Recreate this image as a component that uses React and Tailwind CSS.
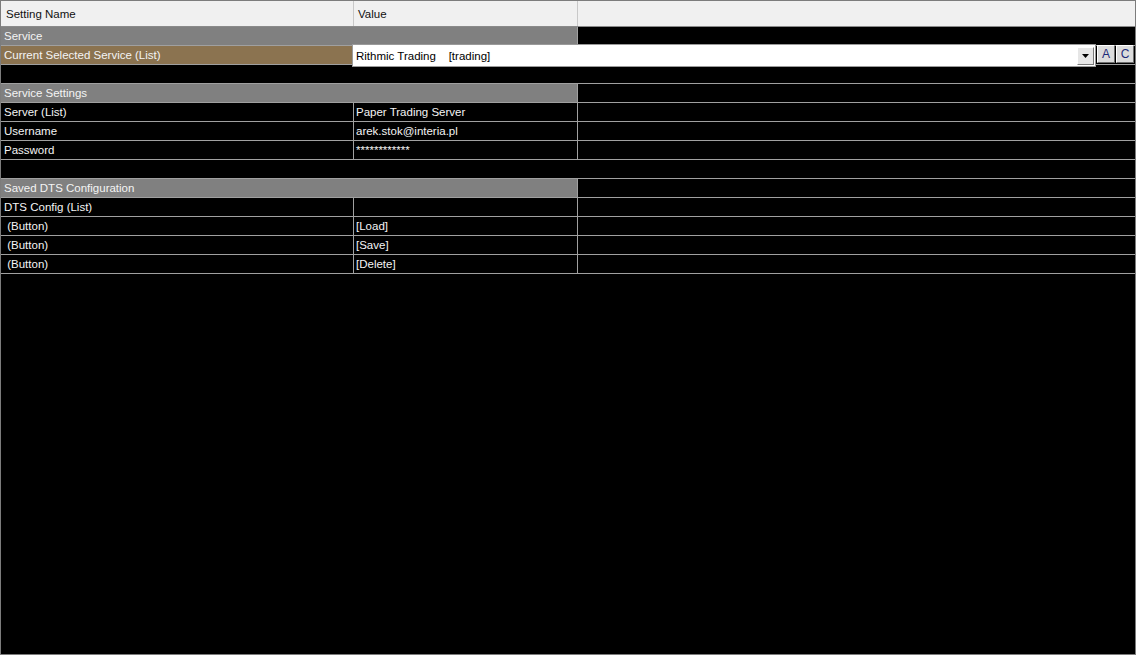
import React from 'react';

const FONT = { fontFamily: '"Liberation Sans", Tahoma, sans-serif' };

// one settings row: name | value | filler
function Row({ name, value }) {
    return (
        <div className="flex h-[19px] border-b border-[#a0a0a0] text-[11.5px] text-[#f4f4f4] leading-[19px]">
            <div className="w-[353px] shrink-0 border-r border-[#a0a0a0] pl-[3px] whitespace-pre">{name}</div>
            <div className="w-[224px] shrink-0 border-r border-[#a0a0a0] pl-[2px] whitespace-pre">{value}</div>
            <div className="flex-1" />
        </div>
    );
}

function GroupRow({ title }) {
    return (
        <div className="flex h-[19px] border-b border-[#a0a0a0] text-[11.5px] text-[#f4f4f4] leading-[19px]">
            <div className="w-[576px] shrink-0 bg-[#808080] pl-[3px]">{title}</div>
            <div className="flex-1 border-l border-[#a0a0a0]" />
        </div>
    );
}

function BlankRow() {
    return <div className="h-[19px] border-b border-[#a0a0a0]" />;
}

function SmallButton({ label }) {
    return (
        <div className="w-[18px] h-[18px] bg-[#dcdcdc] border border-t-white border-l-white border-r-[#6e6e6e] border-b-[#6e6e6e] flex items-center justify-center text-[12px] text-[#1c2a78] leading-none">
            {label}
        </div>
    );
}

export default function App() {
    return (
        <div className="w-[1136px] h-[655px] bg-black border border-[#7c7c7c] overflow-hidden" style={FONT}>
            {/* column headers */}
            <div className="flex h-[26px] bg-[#f0f0f0] border-b border-[#8a8a8a] text-[11.5px] text-[#111] leading-[27px]">
                <div className="w-[353px] shrink-0 border-r border-[#c8c8c8] pl-[5px]">Setting Name</div>
                <div className="w-[224px] shrink-0 border-r border-[#c8c8c8] pl-[4px]">Value</div>
                <div className="flex-1" />
            </div>

            <GroupRow title="Service" />

            {/* selected service row with the open editor */}
            <div className="relative flex h-[19px] border-b border-[#a0a0a0] text-[11.5px] text-[#f4f4f4] leading-[19px]">
                <div className="w-[352px] shrink-0 bg-[#8b7350] pl-[3px]">Current Selected Service (List)</div>
                <div className="absolute left-[351px] top-[-2px] w-[744px] h-[23px] bg-white border border-[#9a9a9a] flex items-center">
                    <span className="pl-[3px] pt-[1px] text-black whitespace-pre">Rithmic Trading    [trading]</span>
                    <div className="ml-auto mr-[1px] w-[17px] h-[18px] bg-[#e6e6e6] border border-t-white border-l-white border-r-[#7a7a7a] border-b-[#7a7a7a] flex items-center justify-center">
                        <svg width="7" height="4" viewBox="0 0 7 4">
                            <path d="M0 0h7L3.5 4z" fill="#000" />
                        </svg>
                    </div>
                </div>
                <div className="absolute left-[1096px] top-[-1px] flex gap-[1px]">
                    <SmallButton label="A" />
                    <SmallButton label="C" />
                </div>
            </div>

            <BlankRow />
            <GroupRow title="Service Settings" />
            <Row name="Server (List)" value="Paper Trading Server" />
            <Row name="Username" value="arek.stok@interia.pl" />
            <Row name="Password" value="************" />
            <BlankRow />
            <GroupRow title="Saved DTS Configuration" />
            <Row name="DTS Config (List)" value="" />
            <Row name=" (Button)" value="[Load]" />
            <Row name=" (Button)" value="[Save]" />
            <Row name=" (Button)" value="[Delete]" />
        </div>
    );
}
